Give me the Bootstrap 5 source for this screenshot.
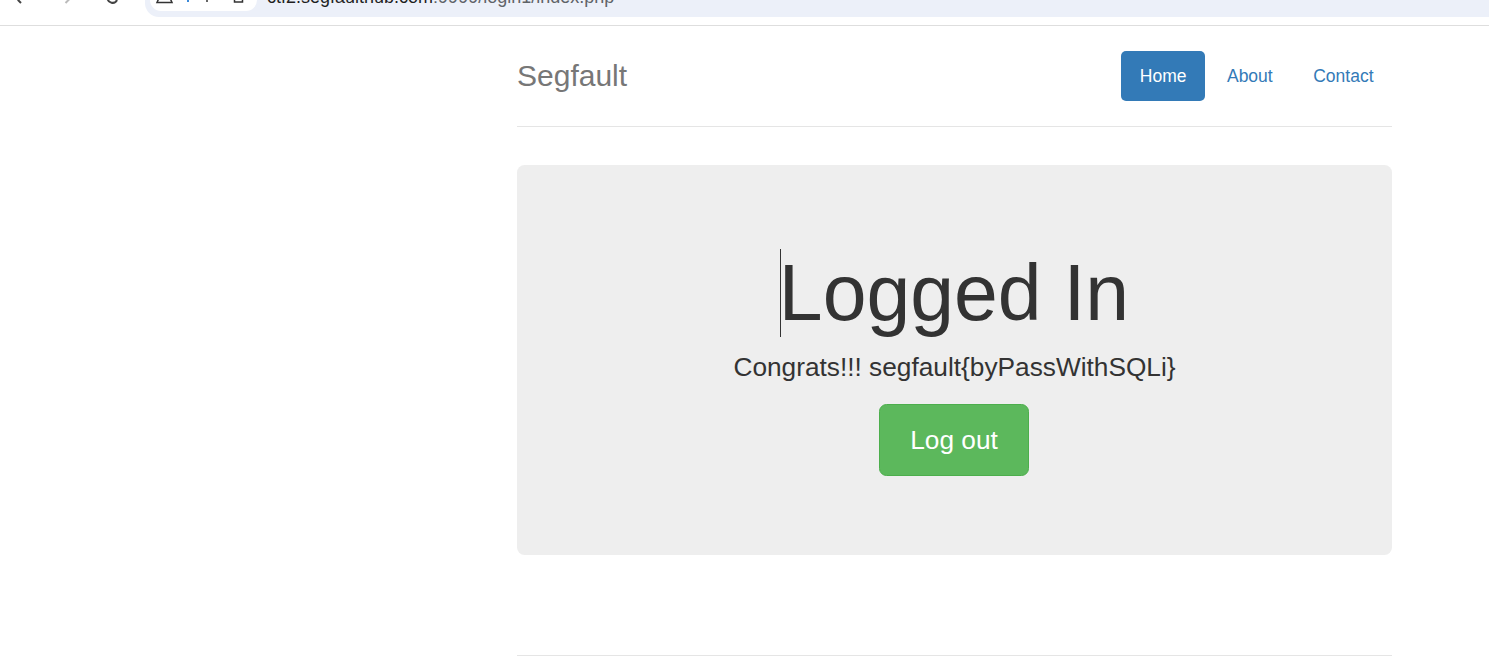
<!DOCTYPE html>
<html lang="en">
<head>
    <meta charset="UTF-8">
    <title>Segfault</title>
    <link href="https://cdn.jsdelivr.net/npm/bootstrap@5.3.0/dist/css/bootstrap.min.css" rel="stylesheet">
    <style>
        body {
            font-family: "Liberation Sans", Arial, sans-serif;
            color: #333;
            background: #fff;
        }
        .chrome-strip {
            height: 26px;
            border-bottom: 1px solid #dedede;
            overflow: hidden;
        }
        .chrome-btns {
            width: 145px;
            height: 8px;
            flex-shrink: 0;
        }
        .addr-pill {
            height: 17px;
            background: #ecf0f9;
            border-radius: 0 0 0 14px;
        }
        .addr-chip {
            width: 107px;
            height: 11px;
            margin-left: 5px;
            background: #fff;
            border-radius: 0 0 11px 11px;
        }
        .addr-chip svg {
            display: block;
        }
        .addr-text {
            font-size: 18px;
            line-height: 20px;
            margin-top: -13px;
            margin-left: 10px;
            color: #1f1f1f;
            white-space: nowrap;
        }
        .addr-text span { color: #5f6368; }
        .page-wrap {
            width: 875px;
            margin-left: 517px;
        }
        .site-head {
            height: 101px;
            padding-top: 25px;
            border-bottom: 1px solid #e5e5e5;
        }
        .site-brand {
            font-size: 30px;
            line-height: 50px;
            color: #777;
        }
        .site-head .nav-item + .nav-item {
            margin-left: 3.5px;
        }
        .site-head .nav-link {
            font-size: 17.5px;
            line-height: 25px;
            padding: 12.5px 18.5px;
            color: #337ab7;
            border-radius: 5px;
        }
        .site-head .nav-link.active {
            background: #337ab7;
            color: #fff;
        }
        .hero {
            height: 390px;
            margin-top: 38px;
            padding-top: 84px;
            background: #eee;
            border-radius: 7.5px;
            text-align: center;
        }
        .hero h1 {
            font-size: 78.75px;
            line-height: 86px;
            font-weight: 400;
            margin: 0;
            color: #333;
        }
        .caret-line {
            display: inline-block;
            width: 1px;
            height: 88px;
            background: #333;
            vertical-align: -17px;
            margin-right: -2px;
        }
        .hero p {
            font-size: 26.25px;
            line-height: 38px;
            margin: 11px 0 18px;
            color: #333;
        }
        .logout-btn {
            font-size: 26.25px;
            line-height: 32px;
            padding: 19px 0;
            width: 150px;
            margin-right: 1px;
            color: #fff;
            background: #5cb85c;
            border: 1px solid #4cae4c;
            border-radius: 7.5px;
        }
        .site-foot {
            margin-top: 100px;
            border-top: 1px solid #e5e5e5;
        }
    </style>
</head>
<body>

<div class="chrome-strip d-flex align-items-start">
    <svg class="chrome-btns" viewBox="0 0 145 8">
        <path d="M23 -4 L18.5 0.5 L21 3" fill="none" stroke="#444" stroke-width="2"/>
        <path d="M65.5 3 L68.5 0 L65 -3" fill="none" stroke="#bbb" stroke-width="2"/>
        <path d="M107.5 -2 A5 5 0 0 0 117 0" fill="none" stroke="#444" stroke-width="2"/>
    </svg>
    <div class="addr-pill flex-grow-1 d-flex align-items-start">
        <div class="addr-chip">
            <svg width="107" height="8" viewBox="0 0 107 8">
                <path d="M9 -2 L7 2.5 H22 L20 -2" fill="none" stroke="#333" stroke-width="1.5"/>
                <path d="M38 0 V2" stroke="#3b8ad9" stroke-width="2"/>
                <path d="M57 0 V2" stroke="#333" stroke-width="1.5"/>
                <path d="M84.5 -2 V2 H92.5 V-2" fill="none" stroke="#333" stroke-width="1.5"/>
            </svg>
        </div>
        <div class="addr-text">ctf2.segfaulthub.com<span>:9999/login1/index.php</span></div>
    </div>
</div>

<div class="page-wrap">
    <div class="site-head d-flex justify-content-between align-items-start">
        <div class="site-brand">Segfault</div>
        <ul class="nav nav-pills">
            <li class="nav-item"><a class="nav-link active" href="#">Home</a></li>
            <li class="nav-item"><a class="nav-link" href="#">About</a></li>
            <li class="nav-item"><a class="nav-link" href="#">Contact</a></li>
        </ul>
    </div>

    <div class="hero">
        <h1><span class="caret-line"></span>Logged In</h1>
        <p>Congrats!!! segfault{byPassWithSQLi}</p>
        <a class="btn logout-btn" href="#">Log out</a>
    </div>

    <div class="site-foot"></div>
</div>

<script src="https://cdn.jsdelivr.net/npm/bootstrap@5.3.0/dist/js/bootstrap.bundle.min.js"></script>
</body>
</html>
